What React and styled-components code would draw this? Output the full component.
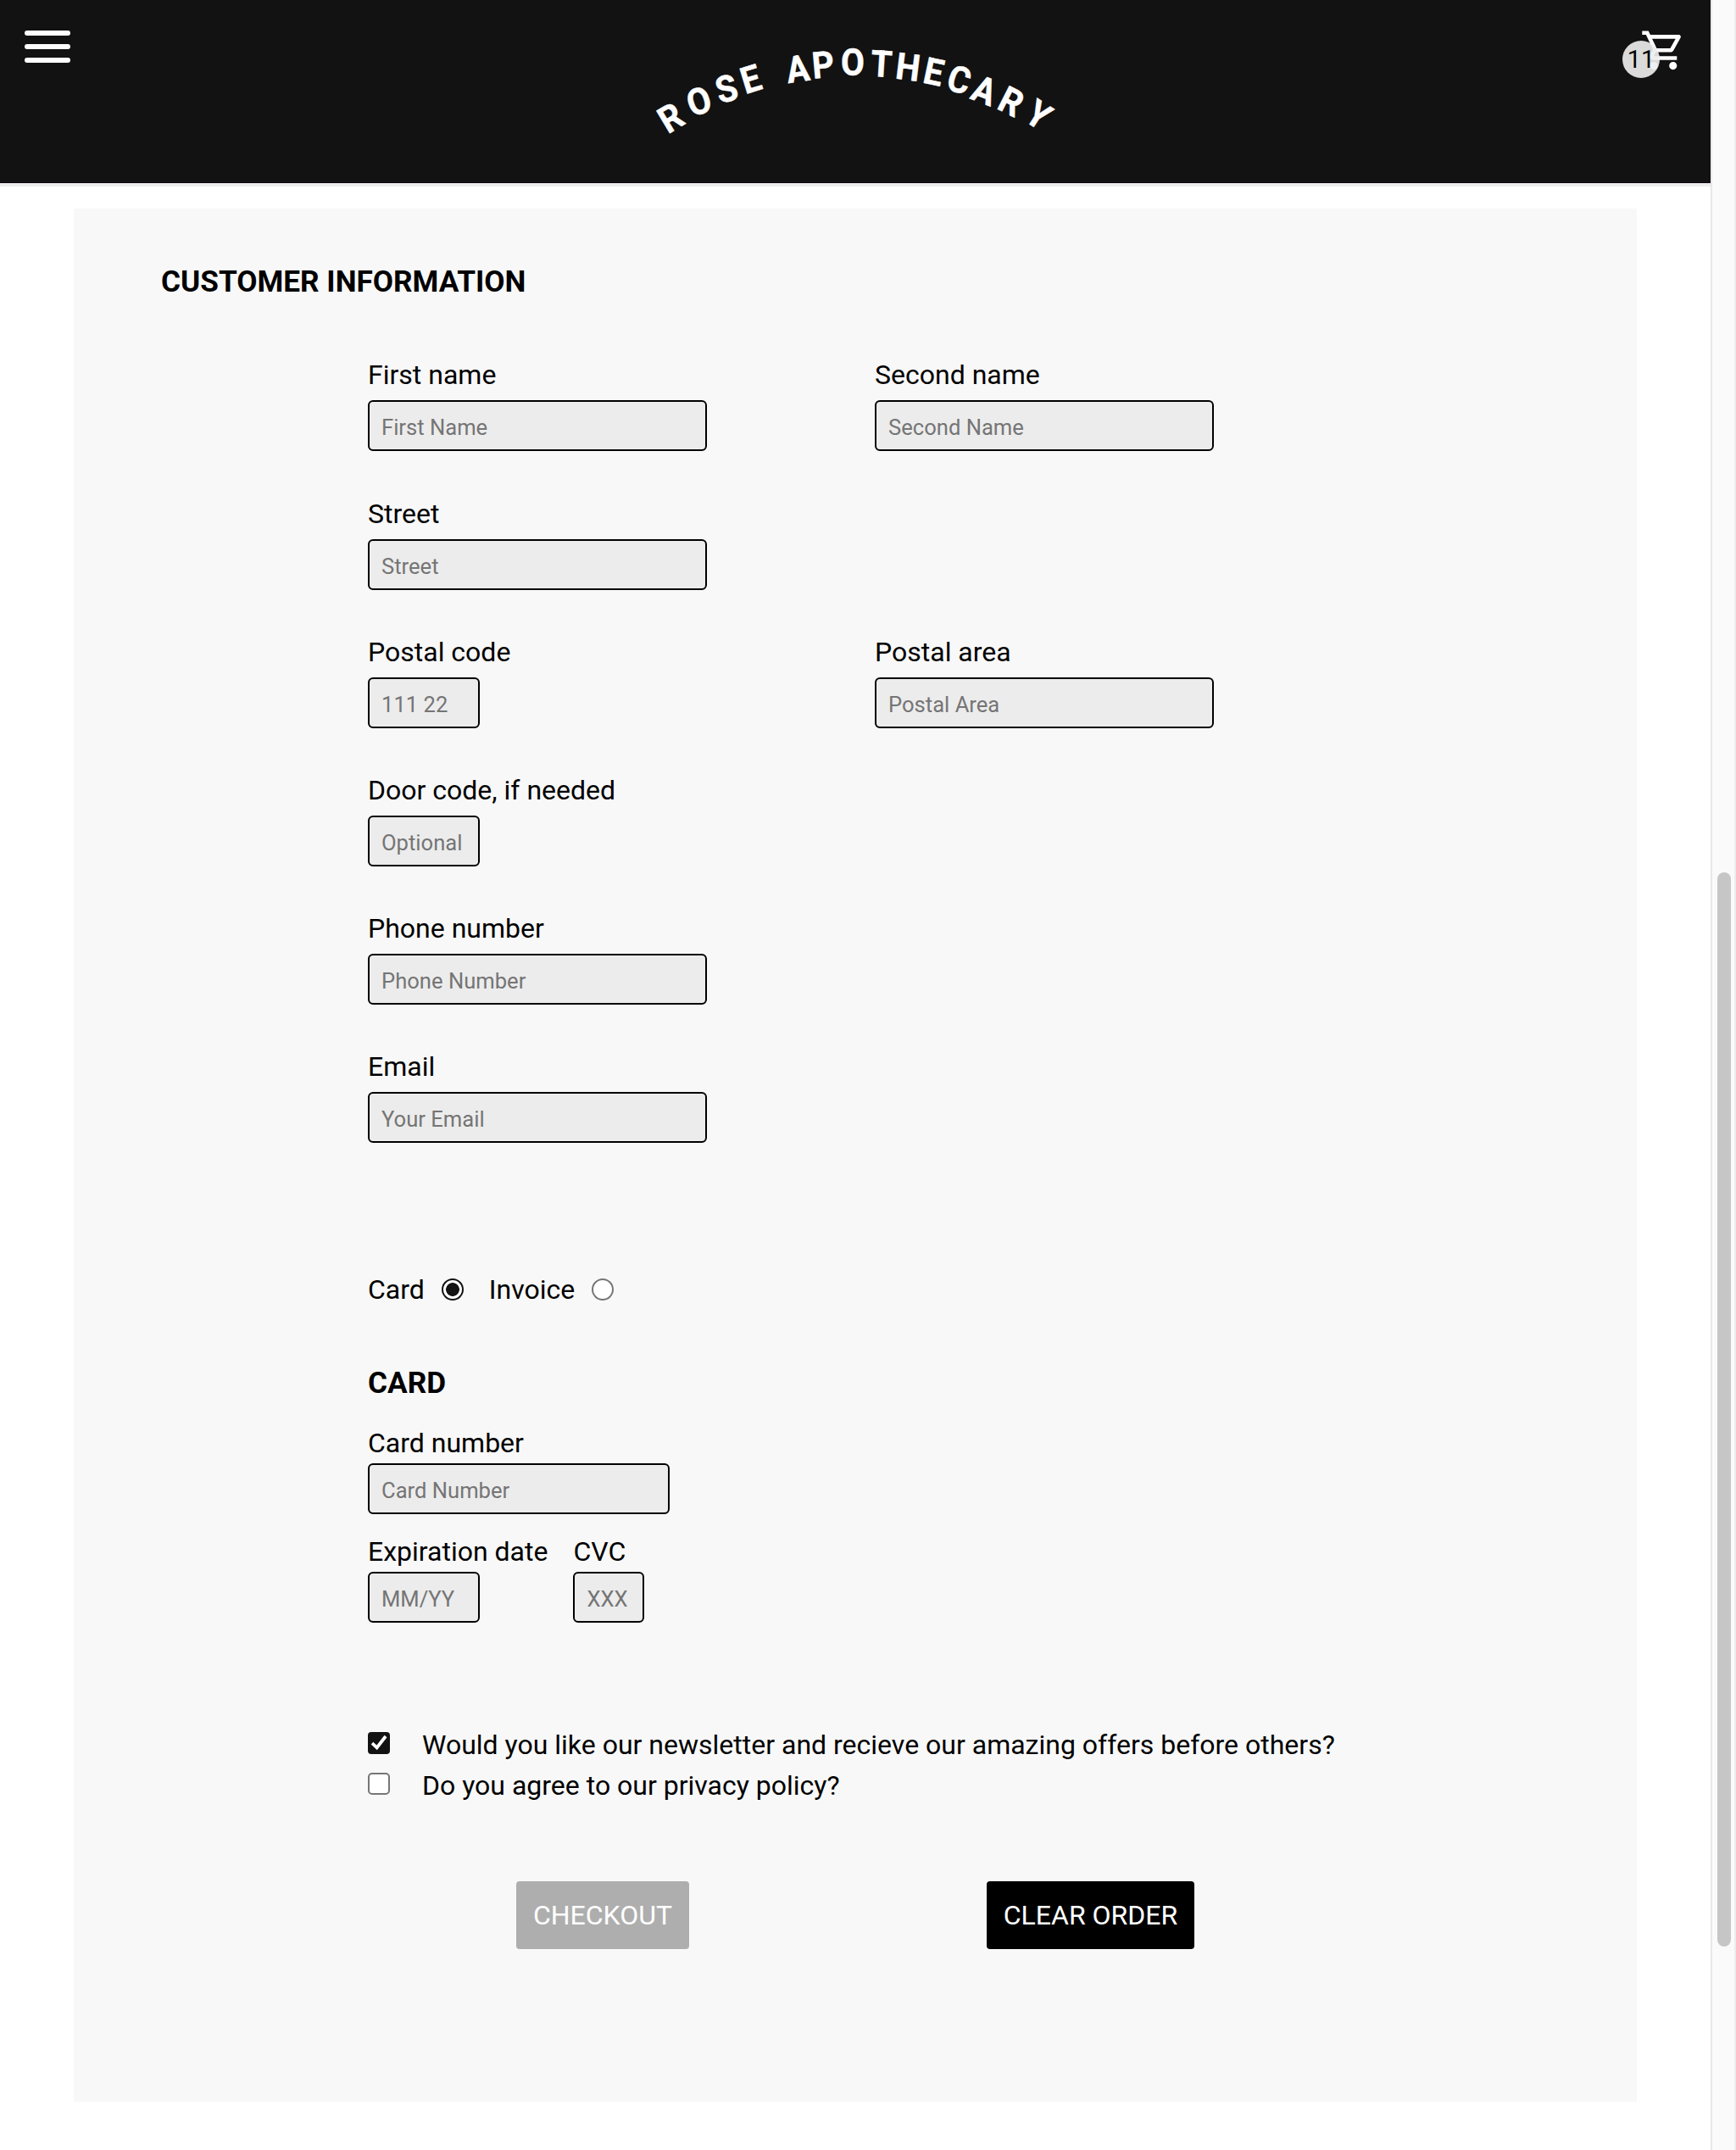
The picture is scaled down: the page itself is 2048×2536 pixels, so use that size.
import React from "react";
import styled, { createGlobalStyle, css } from "styled-components";

const GlobalStyle = createGlobalStyle`
  * { box-sizing: border-box; }
  body { margin: 0; background: #fff; color: #000; font-family: Roboto, "Liberation Sans", sans-serif; font-size: 32px; line-height: 38px; }
  input, button { font-family: inherit; margin: 0; }
`;

const Page = styled.div`
  display: flex;
  width: 2048px;
  height: 2536px;
  overflow: hidden;
`;

const Content = styled.div`
  width: 2018px;
  height: 2536px;
`;

const Header = styled.header`
  display: flex;
  justify-content: space-between;
  align-items: flex-start;
  height: 220px;
  padding: 36px 36px 0 29px;
  background: #121212;
  border-bottom: 4px solid #edebed;
  box-shadow: inset 0 -1px 0 #0c040c;
`;

const Burger = styled.button`
  display: flex;
  flex-direction: column;
  gap: 10px;
  width: 100px;
  padding: 0;
  border: 0;
  background: none;
`;

const BurgerBar = styled.span`
  width: 54px;
  height: 6px;
  border-radius: 3px;
  background: #fff;
`;

const Logo = styled.svg`
  width: 540px;
  height: 160px;
  margin: -6px 0 0 9px;
  fill: #fff;
  stroke: #fff;
  stroke-width: 0.5px;
  stroke-linejoin: round;
  font-family: Roboto, sans-serif;
  font-weight: 700;
  font-size: 43.5px;
  text-anchor: middle;
`;

const Cart = styled.div`
  position: relative;
  width: 100px;
  height: 60px;
  display: flex;
  justify-content: flex-end;
`;

const CartIcon = styled.svg`
  flex: none;
  width: 54.7px;
  height: 54.7px;
  margin: -3.6px -7.4px 0 0;
  fill: #fff;
`;

const CartCount = styled.span`
  position: absolute;
  left: 32px;
  top: 12px;
  width: 44px;
  height: 44px;
  border-radius: 50%;
  background: rgba(237, 237, 237, 0.915);
  font-size: 28.8px;
  line-height: 44px;
  text-align: center;
`;

const Panel = styled.main`
  width: 1844px;
  height: 2233px;
  margin: 26px 0 0 87px;
  padding: 65px 103px 0;
  background: #f8f8f8;
`;

const Title = styled.h2`
  margin: 0;
  font-size: 35.2px;
  line-height: 42px;
  font-weight: 700;
`;

const Form = styled.form`
  padding: 70.4px 0 0 244px;
`;

const FieldGrid = styled.div`
  display: grid;
  grid-template-columns: 400px 400px;
  column-gap: 198px;
  row-gap: 54.2px;
`;

const Field = styled.div`
  display: flex;
  flex-direction: column;
  gap: ${(p) => (p.$tight ? "5px" : "11px")};
  grid-column: ${(p) => p.$col || 1};
`;

const Input = styled.input`
  width: ${(p) => p.$w || 400}px;
  height: 60px;
  padding: 4px 14px 0;
  border: 2px solid #000;
  border-radius: 6px;
  background: #ececec;
  font-size: 25.6px;
  &::placeholder { color: #757575; opacity: 1; }
`;

const Label = styled.label`
  white-space: nowrap;
`;

const PaymentChoice = styled.div`
  display: flex;
  align-items: center;
  margin-top: 153.6px;
`;

const Radio = styled.input`
  appearance: none;
  width: 26px;
  height: 26px;
  border: 2px solid ${(p) => (p.checked ? "#121212" : "#767676")};
  border-radius: 50%;
  background: ${(p) => (p.checked ? "radial-gradient(circle, #121212 7.5px, #fff 8.2px)" : "#fff")};
  && { margin: 0 30px 0 20px; }
`;

const SubTitle = styled.h3`
  margin: 70px 0 31px;
  font-size: 35.2px;
  line-height: 42px;
  font-weight: 700;
`;

const CardRow = styled.div`
  display: flex;
  gap: 30px;
  margin-top: 25px;
`;

const Consents = styled.div`
  display: flex;
  flex-direction: column;
  gap: 10px;
  margin-top: 125px;
`;

const Consent = styled.label`
  display: flex;
  height: 38px;
  gap: 38px;
  white-space: nowrap;
`;

const box = css`
  flex: none;
  width: 26px;
  height: 26px;
  margin-top: 4px;
`;

const CheckedBox = styled.svg`
  ${box}
`;

const EmptyBox = styled.span`
  ${box}
  border: 2px solid #767676;
  border-radius: 5px;
  background: #fff;
`;

const Actions = styled.div`
  display: flex;
  gap: 351px;
  margin: 94px 0 0 175px;
`;

const Action = styled.button`
  width: ${(p) => p.$w}px;
  height: 80px;
  padding: 0;
  border: 0;
  border-radius: 4px;
  background: ${(p) => (p.disabled ? "#aeaeae" : "#000")};
  color: #fff;
  font-size: 32px;
`;

const ScrollTrack = styled.div`
  width: 30px;
  height: 2536px;
  padding: 1029px 0 0 6px;
  border-left: 2px solid #e8e8e8;
  border-right: 2px solid #ededed;
  background: #fafafa;
`;

const ScrollThumb = styled.div`
  width: 16px;
  height: 1267px;
  border-radius: 8px;
  background: #c6c6c6;
`;

const letters = [
  ["R", 51, 108.5, -31],
  ["O", 84.5, 89.2, -18],
  ["S", 117, 74.3, -16],
  ["E", 145.5, 63, -17],
  ["A", 201, 51, -8],
  ["P", 231, 46.2, -5],
  ["O", 266, 43.9, 0],
  ["T", 300, 45, 3.5],
  ["H", 331.4, 48.8, 7],
  ["E", 361.5, 54.5, 12],
  ["C", 391.7, 63.7, 17],
  ["A", 421.5, 76.5, 21],
  ["R", 453, 89.5, 27],
  ["Y", 485.5, 105, 33],
];

function TextField({ label, placeholder, w, col, tight }) {
  return (
    <Field $col={col} $tight={tight}>
      <Label>{label}</Label>
      <Input placeholder={placeholder} $w={w} />
    </Field>
  );
}

export default function App() {
  return (
    <Page>
      <GlobalStyle />
      <Content>
        <Header>
          <Burger aria-label="Menu">
            <BurgerBar />
            <BurgerBar />
            <BurgerBar />
          </Burger>
          <Logo viewBox="0 0 540 160">
            {letters.map(([ch, x, y, angle], i) => (
              <text key={i} transform={`translate(${x} ${y}) rotate(${angle}) translate(0 15.5) scale(0.93 1)`}>
                {ch}
              </text>
            ))}
          </Logo>
          <Cart>
            <CartIcon viewBox="0 0 24 24">
              <path d="M15.55 13c.75 0 1.41-.41 1.75-1.03l3.58-6.49A.996.996 0 0 0 20.01 4H5.21l-.94-2H1v2h2l3.6 7.59-1.35 2.44C4.52 15.37 5.48 17 7 17h12v-2H7l1.1-2h7.45zM6.16 6h12.15l-2.76 5H8.53L6.16 6zM7 18c-1.1 0-1.99.9-1.99 2S5.9 22 7 22s2-.9 2-2-.9-2-2-2zm10 0c-1.1 0-1.99.9-1.99 2s.89 2 1.99 2 2-.9 2-2-.9-2-2-2z" />
            </CartIcon>
            <CartCount>11</CartCount>
          </Cart>
        </Header>
        <Panel>
          <Title>CUSTOMER INFORMATION</Title>
          <Form>
            <FieldGrid>
              <TextField label="First name" placeholder="First Name" />
              <TextField label="Second name" placeholder="Second Name" col={2} />
              <TextField label="Street" placeholder="Street" />
              <TextField label="Postal code" placeholder="111 22" w={132} />
              <TextField label="Postal area" placeholder="Postal Area" col={2} />
              <TextField label="Door code, if needed" placeholder="Optional" w={132} />
              <TextField label="Phone number" placeholder="Phone Number" />
              <TextField label="Email" placeholder="Your Email" />
            </FieldGrid>
            <PaymentChoice>
              <Label>Card</Label>
              <Radio type="radio" name="payment" checked readOnly />
              <Label>Invoice</Label>
              <Radio type="radio" name="payment" checked={false} readOnly />
            </PaymentChoice>
            <SubTitle>CARD</SubTitle>
            <TextField label="Card number" placeholder="Card Number" w={356} tight />
            <CardRow>
              <TextField label="Expiration date" placeholder="MM/YY" w={132} tight />
              <TextField label="CVC" placeholder="XXX" w={84} tight />
            </CardRow>
            <Consents>
              <Consent>
                <CheckedBox viewBox="0 0 26 26">
                  <rect width="26" height="26" rx="4" fill="#121212" />
                  <path d="M5 13.2 L10.6 18.4 L21 5" fill="none" stroke="#fff" strokeWidth="3.8" />
                </CheckedBox>
                Would you like our newsletter and recieve our amazing offers before others?
              </Consent>
              <Consent>
                <EmptyBox />
                Do you agree to our privacy policy?
              </Consent>
            </Consents>
            <Actions>
              <Action type="button" disabled $w={204}>CHECKOUT</Action>
              <Action type="button" $w={245}>CLEAR ORDER</Action>
            </Actions>
          </Form>
        </Panel>
      </Content>
      <ScrollTrack>
        <ScrollThumb />
      </ScrollTrack>
    </Page>
  );
}
